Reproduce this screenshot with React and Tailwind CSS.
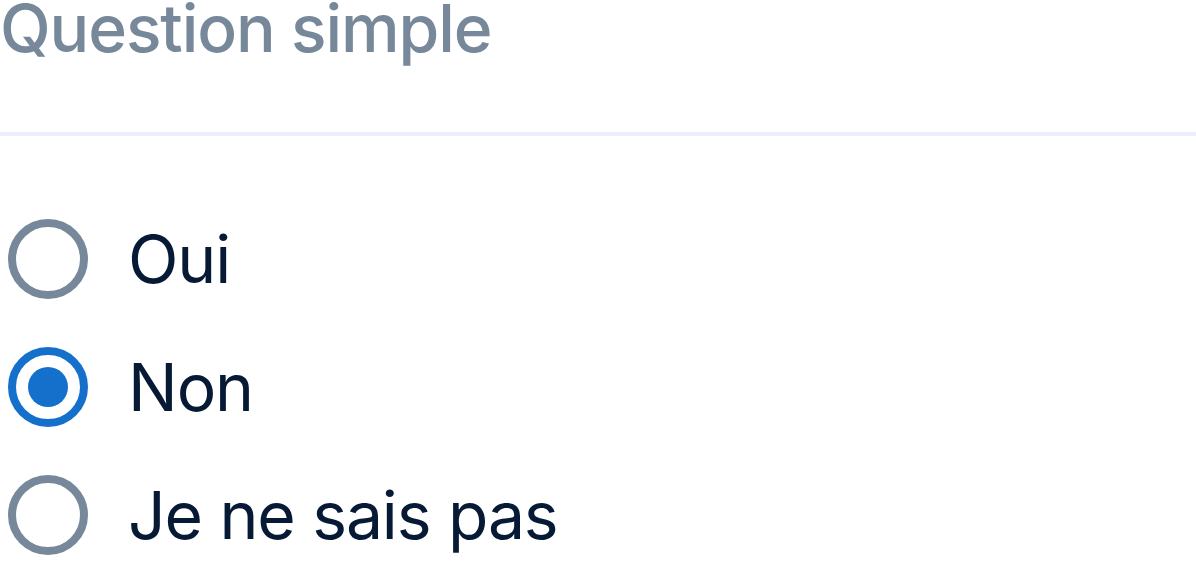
import React, { useState } from "react";

const options = ["Oui", "Non", "Je ne sais pas"];

const Radio = ({ checked }) => (
  <span
    className={`flex h-[80px] w-[80px] shrink-0 items-center justify-center rounded-full border-[8px] ${
      checked ? "border-[#1570cb]" : "border-[#77889b]"
    }`}
  >
    {checked && <span className="h-[40px] w-[40px] rounded-full bg-[#1570cb]" />}
  </span>
);

export default function App() {
  const [value, setValue] = useState("Non");

  return (
    <div className="min-h-screen overflow-hidden bg-white font-['Inter',sans-serif]">
      {/* Question title */}
      <h1 className="-mt-[12px] text-[66px] leading-[80px] font-medium tracking-[-1.1px] text-[#77889b]">
        Question simple
      </h1>

      <div className="mt-[64px] border-t-[4px] border-[#eaeefa]" />

      {/* Choices */}
      <div className="flex flex-col pt-[59px] pl-[8px]">
        {options.map((opt) => (
          <label
            key={opt}
            onClick={() => setValue(opt)}
            className="flex h-[128px] cursor-pointer items-center gap-[40px]"
          >
            <Radio checked={value === opt} />
            <span className="text-[66px] leading-none tracking-[-1.1px] text-[#071a35]">{opt}</span>
          </label>
        ))}
      </div>
    </div>
  );
}
